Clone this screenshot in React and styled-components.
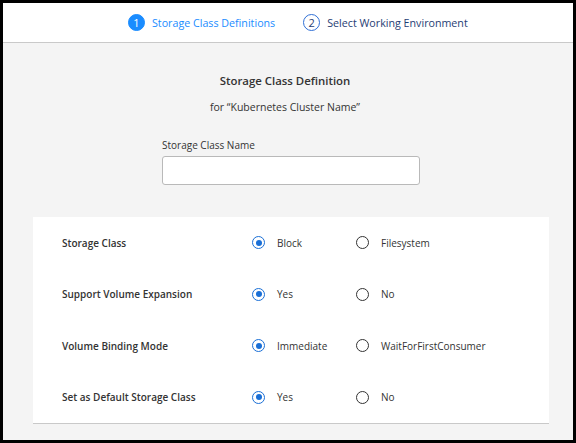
import React from "react";
import styled, { createGlobalStyle } from "styled-components";

const Global = createGlobalStyle`
  html, body { margin: 0; padding: 0; background: #000; }
  body { font-family: "Open Sans", "Liberation Sans", sans-serif; }
  * { box-sizing: border-box; }
`;

const Frame = styled.div`
  width: 576px;
  height: 443px;
  border: 3px solid #000;
  background: #f4f4f4;
  display: flex;
  flex-direction: column;
  overflow: hidden;
`;

const Header = styled.div`
  height: 40px;
  flex-shrink: 0;
  background: #fff;
  border-bottom: 1px solid #c9c9c9;
  display: flex;
  align-items: center;
  padding-left: 125px;
  gap: 28px;
`;

const Step = styled.div`
  display: flex;
  align-items: center;
  gap: 7px;
  font-size: 10.7px;
  color: ${(p) => (p.$active ? "#1a8cff" : "#1f3d74")};
`;

const StepNum = styled.span`
  width: 17px;
  height: 17px;
  border-radius: 50%;
  display: flex;
  align-items: center;
  justify-content: center;
  font-size: 11px;
  background: ${(p) => (p.$active ? "#1a8cff" : "#fff")};
  color: ${(p) => (p.$active ? "#fff" : "#1f3d74")};
  border: 1px solid ${(p) => (p.$active ? "#1a8cff" : "#2f6fd6")};
`;

const Body = styled.div`
  flex: 1;
  display: flex;
  flex-direction: column;
  padding-top: 30px;
`;

const Title = styled.div`
  text-align: center;
  font-size: 11.4px;
  font-weight: 600;
  color: #333;
  line-height: 16px;
  padding-right: 6px;
`;

const Subtitle = styled.div`
  text-align: center;
  font-size: 10.5px;
  color: #333;
  line-height: 16px;
  margin-top: 10px;
  padding-right: 6px;
`;

const Field = styled.div`
  margin: 22px 0 0 159px;
  width: 258px;
  display: flex;
  flex-direction: column;
  gap: 3px;
`;

const Label = styled.label`
  font-size: 10px;
  color: #333;
  line-height: 16px;
`;

const Input = styled.input`
  height: 29px;
  border: 1px solid #b9b9b9;
  border-radius: 3px;
  background: #fff;
  outline: none;
`;

const Card = styled.div`
  margin: 32px 24px 0 30px;
  background: #fff;
  border-bottom: 1px solid #c9c9c9;
`;

const Row = styled.div`
  height: 51.5px;
  display: grid;
  grid-template-columns: 190px 104px 1fr;
  align-items: center;
  padding-left: 29px;
`;

const RowLabel = styled.div`
  font-size: 10px;
  font-weight: 600;
  color: #333;
`;

const Option = styled.div`
  display: flex;
  align-items: center;
  gap: 12px;
  font-size: 10px;
  color: #333;
`;

const Radio = styled.span`
  width: 13px;
  height: 13px;
  border-radius: 50%;
  border: 1.5px solid ${(p) => (p.$checked ? "#1a6fd6" : "#333")};
  display: flex;
  align-items: center;
  justify-content: center;
  &::after {
    content: "";
    width: 6px;
    height: 6px;
    border-radius: 50%;
    background: ${(p) => (p.$checked ? "#1a6fd6" : "transparent")};
  }
`;

const rows = [
  ["Storage Class", "Block", "Filesystem"],
  ["Support Volume Expansion", "Yes", "No"],
  ["Volume Binding Mode", "Immediate", "WaitForFirstConsumer"],
  ["Set as Default Storage Class", "Yes", "No"],
];

export default function App() {
  return (
    <>
      <Global />
      <Frame>
        <Header>
          <Step $active>
            <StepNum $active>1</StepNum>
            Storage Class Definitions
          </Step>
          <Step>
            <StepNum>2</StepNum>
            Select Working Environment
          </Step>
        </Header>
        <Body>
          <Title>Storage Class Definition</Title>
          <Subtitle>for “Kubernetes Cluster Name”</Subtitle>
          <Field>
            <Label>Storage Class Name</Label>
            <Input type="text" />
          </Field>
          <Card>
            {rows.map(([label, a, b]) => (
              <Row key={label}>
                <RowLabel>{label}</RowLabel>
                <Option>
                  <Radio $checked />
                  {a}
                </Option>
                <Option>
                  <Radio />
                  {b}
                </Option>
              </Row>
            ))}
          </Card>
        </Body>
      </Frame>
    </>
  );
}
